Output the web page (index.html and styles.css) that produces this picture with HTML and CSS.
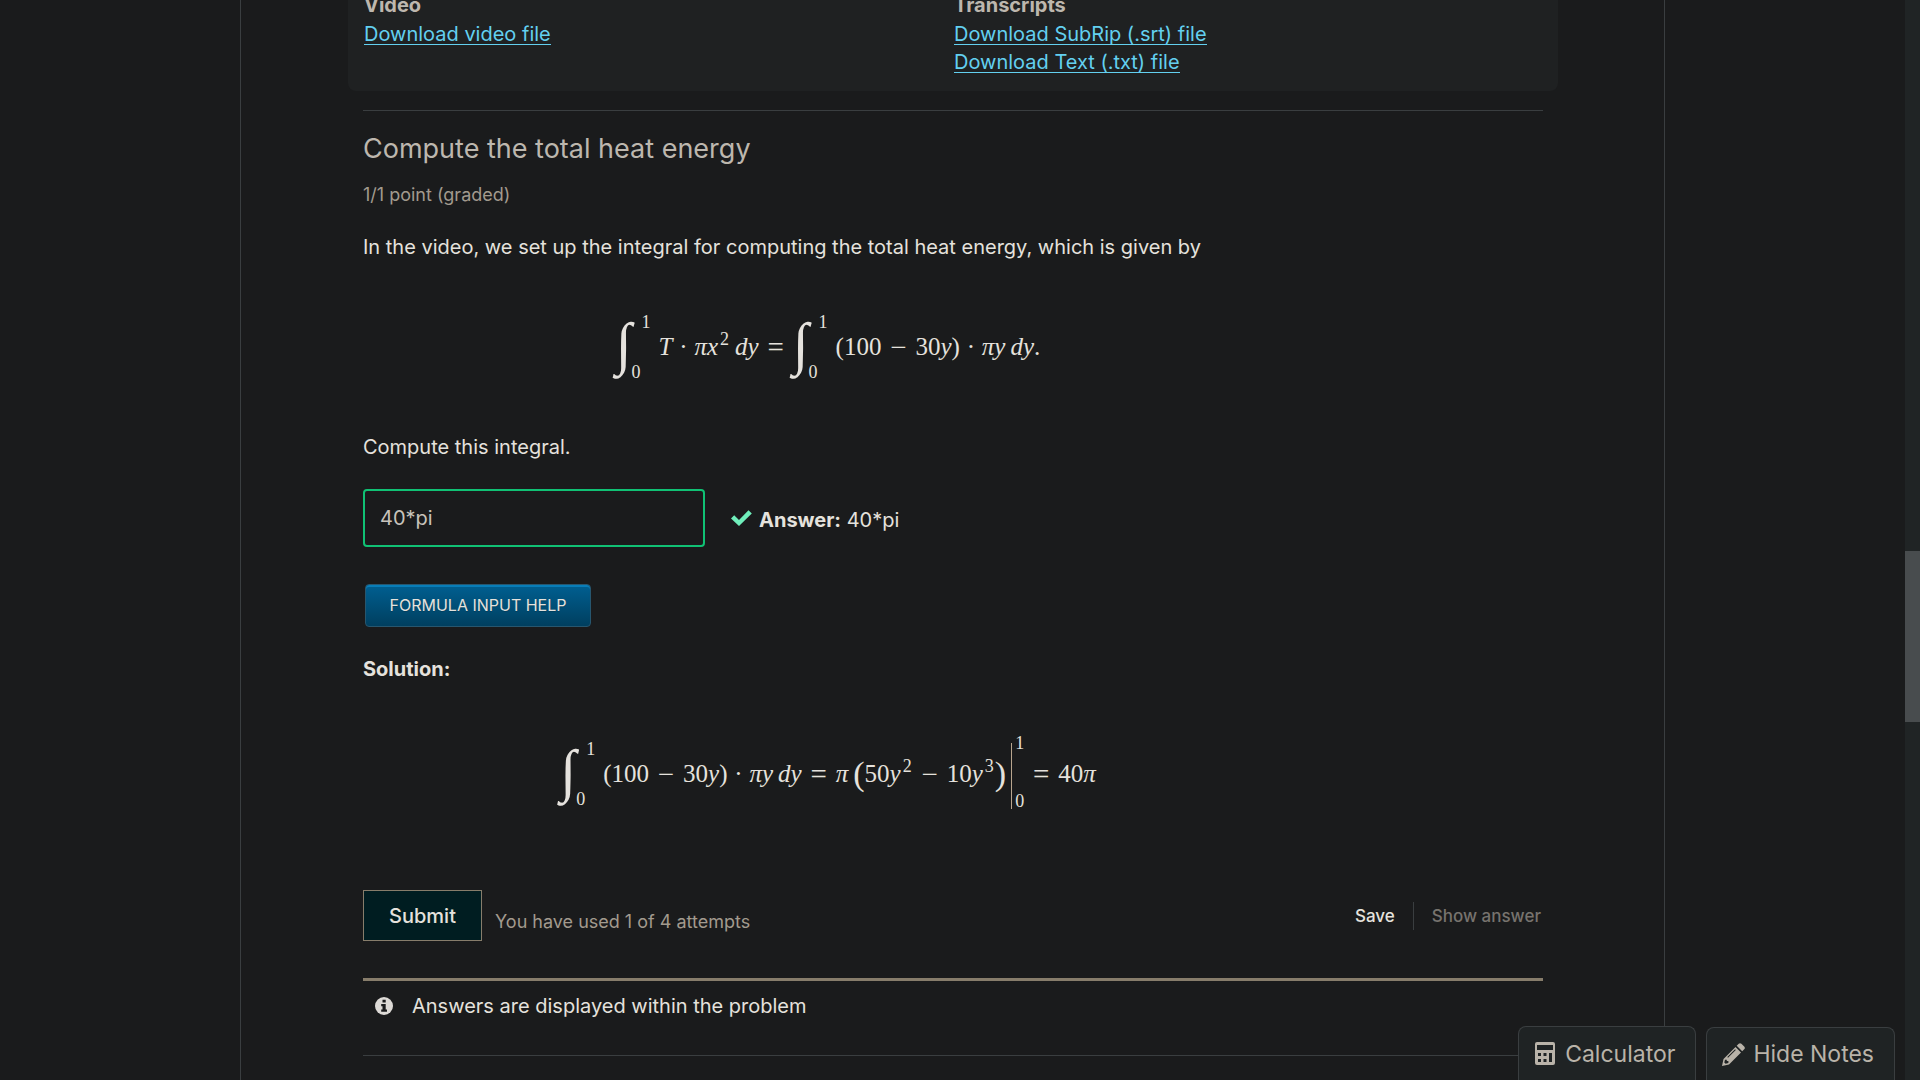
FILE: index.html
```html
<!DOCTYPE html>
<html lang="en">
<head>
<meta charset="utf-8">
<meta name="viewport" content="width=device-width, initial-scale=1">
<title>Compute the total heat energy</title>
<link rel="stylesheet" href="styles.css">
</head>
<body>
<div class="viewport">
  <main class="course">
    <section class="downloads">
      <div class="download-group">
        <h3>Video</h3>
        <a href="#video">Download video file</a>
      </div>
      <div class="download-group">
        <h3>Transcripts</h3>
        <a href="#srt">Download SubRip (.srt) file</a>
        <a href="#txt">Download Text (.txt) file</a>
      </div>
    </section>

    <section class="problem">
      <h2>Compute the total heat energy</h2>
      <p class="progress">1/1 point (graded)</p>
      <p class="prompt">In the video, we set up the integral for computing the total heat energy, which is given by</p>

      <div class="equation">
        <span class="integral"><span class="int-sign">∫</span><span class="limits"><span>1</span><span>0</span></span></span>
        <i>T</i><span class="dot">·</span><i>πx</i><sup>2</sup><i class="thin">dy</i><span class="op">=</span>
        <span class="integral"><span class="int-sign">∫</span><span class="limits"><span>1</span><span>0</span></span></span>
        <span>(100</span><span class="op">−</span><span>30<i>y</i>)</span><span class="dot">·</span><i>πy</i><i class="thin">dy</i><span>.</span>
      </div>

      <p class="instruction"><label for="answer">Compute this integral.</label></p>
      <div class="answer-row">
        <input id="answer" class="answer-input" type="text" value="40*pi">
        <svg class="check" viewBox="0 0 21 16" aria-hidden="true"><path d="M0 8.500 3.200 5.200 8 9.900 17.500.300 20.800 3.500 8 16z"/></svg>
        <span class="answer"><strong>Answer:</strong> 40*pi</span>
      </div>
      <button class="help" type="button">FORMULA INPUT HELP</button>
      <p class="solution-title"><strong>Solution:</strong></p>

      <div class="equation solution">
        <span class="integral"><span class="int-sign">∫</span><span class="limits"><span>1</span><span>0</span></span></span>
        <span>(100</span><span class="op">−</span><span>30<i>y</i>)</span><span class="dot">·</span><i>πy</i><i class="thin">dy</i><span class="op">=</span><i>π</i>
        <span class="big-paren thin">(</span><span>50<i>y</i></span><sup>2</sup><span class="op">−</span><span>10<i>y</i></span><sup>3</sup><span class="big-paren">)</span>
        <span class="evaluated"><span>1</span><span>0</span></span><span class="op">=</span><span>40<i>π</i></span>
      </div>

      <div class="actions">
        <button class="submit" type="button">Submit</button>
        <span class="attempts">You have used 1 of 4 attempts</span>
        <button class="plain save" type="button">Save</button>
        <button class="plain show" type="button" disabled>Show answer</button>
      </div>

      <div class="notice">
        <svg viewBox="0 0 18 18" aria-hidden="true"><circle cx="9" cy="9" r="9" fill="#dddad6"/><path fill="#1a1b1c" d="M7.500 2.700h3.200v2.700H7.500zM6.200 7h4.500v5.500H12v2.200H6.200v-2.200h1.300V9.200H6.200z"/></svg>
        <span>Answers are displayed within the problem</span>
      </div>
    </section>
  </main>

  <div class="tools">
    <button class="tool" type="button">
      <svg class="calc-icon" viewBox="0 0 20 23" aria-hidden="true"><path fill="#b9b3a9" fill-rule="evenodd" d="M2 0h16a2 2 0 0 1 2 2v19a2 2 0 0 1-2 2H2a2 2 0 0 1-2-2V2a2 2 0 0 1 2-2zM2 3v5h16V3zM3 11v3h3v-3zM8.500 11v3h3v-3zM14 11v9h3v-9zM3 17v3h3v-3zM8.500 17v3h3v-3z"/></svg>
      <span>Calculator</span>
    </button>
    <button class="tool notes" type="button">
      <svg class="pencil-icon" viewBox="0 0 23 23" aria-hidden="true"><path fill="#b9b3a9" fill-rule="evenodd" d="M13.500 4 19 9.500 7 21.500 0 23l1.500-7zM3 16.800 2.300 19.500l1.300 1.300 2.800-.7v-2H4.800v-1.300zM13.100 6.300 5.300 14.100l.7.700 7.800-7.800zM14.700 2.800 16.700.8q1.300-1.200 2.700 0l2.800 2.800q1.300 1.300 0 2.700l-2 2z"/></svg>
      <span>Hide Notes</span>
    </button>
  </div>
  <div class="scroll-track"><div class="scroll-thumb"></div></div>
</div>
</body>
</html>
```
FILE: styles.css
```css
* { box-sizing: border-box; }

body {
  margin: 0;
  background: #1a1b1c;
  color: #e5e2dd;
  font: 20px/28px Inter, sans-serif;
}

h2, h3, p { margin: 0; }
button, input { font: inherit; }

.viewport {
  position: relative;
  height: 100vh;
  overflow: hidden;
  padding-right: 15px;
}

.course {
  max-width: 1425px;
  min-height: 100%;
  margin: 0 auto;
  padding: 0 106px 0 107px;
  border: solid #3a3e40;
  border-width: 0 1px;
}

.downloads {
  display: grid;
  grid-template-columns: 1fr 1fr;
  height: 91px;
  padding: 0 14px 12px 16px;
  align-content: end;
  background: #1f2122;
  border-radius: 0 0 8px 8px;
}

.download-group {
  display: flex;
  flex-direction: column;
  align-items: flex-start;
}

.download-group h3 {
  margin-bottom: 4px;
  color: #bdb7ae;
  font-size: 20px;
  line-height: 28px;
}

.download-group a {
  color: #63d0f0;
  line-height: 19px;
  padding-top: 2px;
  margin-bottom: 6px;
  text-decoration: none;
  border-bottom: 1px solid;
}

.problem {
  margin: 19px 15px 0;
  border-top: 1px solid #3a3e40;
  padding-top: 20px;
  border-bottom: 1px solid #3a3e40;
}

.problem h2 {
  color: #bdb7ae;
  font-size: 27px;
  line-height: 36px;
  font-weight: 400;
}

.progress {
  margin-top: 14px;
  color: #a29a8e;
  font-size: 18px;
}

.prompt { margin-top: 24px; }

.equation {
  display: flex;
  align-items: center;
  justify-content: center;
  max-width: 930px;
  height: 80px;
  margin-top: 46px;
  font: 25px/30px "Liberation Serif", serif;
  color: #e5e2dd;
}

.equation sup {
  padding: 0 1px 16px 2px;
  font-size: 18px;
  line-height: 20px;
  vertical-align: baseline;
}

.op {
  width: 34px;
  font-size: 29px;
  text-align: center;
}

.dot {
  width: 22px;
  text-align: center;
}

.thin { margin-left: 5px; }

.integral {
  display: flex;
  align-items: center;
  margin-right: 8px;
}

.int-sign {
  padding-bottom: 6px;
  font: italic 58px/60px "Liberation Serif", serif;
}

.limits, .evaluated {
  display: flex;
  flex-direction: column;
  justify-content: space-between;
  height: 66px;
  font-size: 18px;
  line-height: 16px;
}

.limits span:first-child { margin-left: 10px; }

.instruction { margin-top: 46px; }

.answer-row {
  display: flex;
  align-items: center;
  margin-top: 28px;
}

.answer-input {
  width: 342px;
  height: 58px;
  padding: 0 15px;
  border: 2px solid #10c174;
  border-radius: 4px;
  background: #1a1b1c;
  color: #c8c3bb;
}

.check {
  width: 21px;
  height: 16px;
  margin: 0 7px 0 26px;
  fill: #70eebb;
}

.answer { padding-top: 4px; }

.help {
  display: block;
  width: 226px;
  height: 43px;
  margin: 37px 0 0 2px;
  padding: 0 0 2px;
  border: 1px solid #27566e;
  border-radius: 4px;
  background: linear-gradient(#005f91, #003f5f);
  box-shadow: inset 0 2px #087db8;
  color: #e5e2dd;
  font-size: 16px;
  text-shadow: 0 1px #003f5f;
}

.solution-title { margin-top: 28px; }
.solution { margin-top: 51px; }

.big-paren { font-size: 34px; }

.evaluated {
  border-left: 1px solid #b8a58e;
  margin: 4px 0 0 5px;
  padding-left: 3px;
}

.evaluated span:first-child { margin-top: -8px; }

.actions {
  display: flex;
  align-items: center;
  margin-top: 76px;
}

.submit {
  width: 119px;
  height: 51px;
  border: 1px solid #877d6b;
  background: #001d21;
  color: #e5e2dd;
  font-weight: 500;
}

.attempts {
  margin: 12px auto 0 13px;
  color: #a29a8e;
  font-size: 18px;
}

.plain {
  padding: 0;
  border: 0;
  background: none;
  font-size: 17px;
  font-weight: 500;
  color: #e5e2dd;
}

.save {
  padding-right: 18px;
  border-right: 1px solid #3a3e40;
}

.show {
  padding: 0 2px 0 18px;
  color: #77736e;
}

.notice {
  display: flex;
  align-items: center;
  gap: 19px;
  margin-top: 37px;
  padding: 11px 12px 35px;
  border-top: 3px solid #877d6b;
}

.notice svg { width: 18px; height: 18px; }

.tools {
  position: absolute;
  right: 25px;
  bottom: 0;
  display: flex;
  align-items: flex-end;
  gap: 10px;
}

.tool {
  display: flex;
  align-items: center;
  gap: 10px;
  height: 54px;
  padding: 0 20px 0 16px;
  border: 1px solid #3a3e40;
  border-bottom: 0;
  border-radius: 8px 8px 0 0;
  background: #1f2324;
  color: #b9b3a9;
  font-size: 23px;
}

.notes { height: 53px; gap: 8px; padding-left: 15px; }
.calc-icon { width: 20px; height: 23px; }
.pencil-icon { width: 23px; height: 23px; }

.scroll-track {
  position: absolute;
  top: 0;
  right: 0;
  width: 15px;
  height: 100%;
  padding-top: 551px;
  background: #202425;
}

.scroll-thumb { height: 171px; background: #484c4e; }
```
